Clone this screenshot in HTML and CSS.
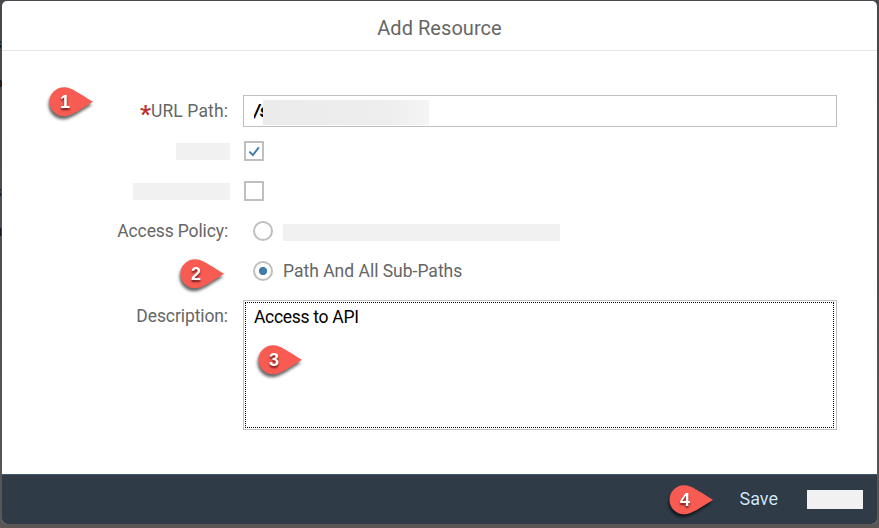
FILE: index.html
```html
<!DOCTYPE html>
<html lang="en">
<head>
<meta charset="utf-8">
<title>Add Resource</title>
<link rel="stylesheet" href="styles.css">
</head>
<body>
<div class="behind" aria-hidden="true"><span class="b1">s</span><span class="b2">o</span><span class="b3">s</span><span class="b4">a</span></div>
<main class="dialog">
  <header class="header"><h1 class="title">Add Resource</h1></header>
  <form class="form">
    <label class="label url"><b class="star">*</b><span>URL Path:</span></label>
    <div class="input"><span class="value">/s</span><span class="mask mask-url"></span></div>
    <span class="label"><span class="mask mask-a"></span></span>
    <span class="check"><svg width="16" height="16" viewBox="0 0 16 16"><path d="M3.400 8.600 6.900 12 12.900 4.300" fill="none" stroke="#427cac" stroke-width="1.900"/></svg></span>
    <span class="label"><span class="mask mask-b"></span></span>
    <span class="check"></span>
    <span class="label policy">Access Policy:</span>
    <div class="option"><span class="radio"></span><span class="mask mask-c"></span></div>
    <span></span>
    <div class="option"><span class="radio on"></span><span class="path">Path And All Sub-Paths</span></div>
    <label class="label desc">Description:</label>
    <div class="area"><div class="focus"><span class="api">Access to API</span></div></div>
  </form>
  <footer class="footer"><span class="save">Save</span><span class="mask mask-d"></span></footer>
</main>
<svg width="0" height="0" class="defs"><defs><path id="pin" d="M15 .3C21 .3 25 3 44 14.8C26 26.300 21 29.300 15 29.300A14.500 14.500 0 0 1 15 .3Z"/></defs></svg>
<div class="pin p1"><svg width="45" height="30"><use href="#pin"/></svg><b>1</b></div>
<div class="pin p2"><svg width="45" height="30"><use href="#pin"/></svg><b>2</b></div>
<div class="pin p3"><svg width="45" height="30"><use href="#pin"/></svg><b>3</b></div>
<div class="pin p4"><svg width="45" height="30"><use href="#pin"/></svg><b>4</b></div>
</body>
</html>
```
FILE: styles.css
```css
* { box-sizing: border-box; }
body {
  margin: 0;
  width: 879px;
  height: 528px;
  padding: 1px 2px 4px;
  overflow: hidden;
  position: relative;
  background: linear-gradient(#48474b, #504f51 50%, #5a5654);
  font-family: Roboto, "Liberation Sans", sans-serif;
  font-size: 17.5px;
  line-height: 20px;
  color: #666;
}
.behind span { position: absolute; left: -7px; color: #111; font-size: 17px; }
.behind .b1 { top: 33px; }
.behind .b2 { top: 72px; }
.behind .b3 { top: 181px; }
.behind .b4 { top: 220px; }
.dialog {
  position: relative;
  height: 523px;
  display: flex;
  flex-direction: column;
  background: #fff;
  border-radius: 5px;
  overflow: hidden;
}
.header {
  height: 50px;
  padding-top: 5px;
  border-bottom: 1px solid #e5e5e5;
  display: flex;
  align-items: center;
  justify-content: center;
}
.title { margin: 0; font-size: 20px; font-weight: 400; letter-spacing: .05px; white-space: nowrap; }
.form {
  flex: 1;
  padding: 40px 40px 0 0;
  display: grid;
  grid-template-columns: 226px 594px;
  column-gap: 15px;
  grid-template-rows: repeat(5, 40px) 130px;
  align-items: center;
  align-content: start;
}
.label { display: flex; justify-content: flex-end; white-space: nowrap; }
.url { letter-spacing: .12px; }
.policy { letter-spacing: -.13px; }
.star { color: #b33; font-size: 24px; line-height: 20px; padding-top: 3px; height: 20px; letter-spacing: 0; }
.input {
  height: 32px;
  border: 1px solid #bfbfbf;
  padding-left: 10px;
  display: flex;
  align-items: center;
}
.value { width: 9px; overflow: hidden; color: #000; font-style: italic; font-weight: 900; white-space: nowrap; }
.mask { background: #f1f1f1; height: 17px; }
.mask-url { width: 166px; height: 25px; margin-top: 2px; background: linear-gradient(90deg, #ebebeb, #eee 75%, #f4f4f4); }
.mask-a { width: 54px; margin-right: -2px; }
.mask-b { width: 97px; margin-right: -2px; }
.mask-c { width: 277px; margin-top: 3px; }
.check { width: 20px; height: 20px; margin-left: 1px; border: 2px solid #bfbfbf; display: flex; }
.option { padding-left: 10px; display: flex; gap: 10px; align-items: center; }
.radio { width: 20px; height: 20px; border: 2px solid #bfbfbf; border-radius: 50%; }
.radio.on { background: radial-gradient(circle, #427cac 3.7px, transparent 4.5px); }
.desc { align-self: start; margin-top: 15px; letter-spacing: -.1px; }
.area { margin-top: 18px; height: 130px; padding: 1px 2px 1px 1px; border: 1px solid #bfbfbf; }
.focus { height: 126px; border: 1px dotted #000; padding: 4px 0 0 8px; color: #000; }
.api { letter-spacing: -.3px; }
.footer {
  height: 50px;
  background: #2f3c48;
  border-top: 1px solid #3f566c;
  display: flex;
  align-items: center;
  justify-content: flex-end;
  padding: 0 14px 2px 0;
  gap: 29px;
}
.save { color: #d1e8ff; font-size: 18px; text-shadow: 0 0 1px #111; }
.mask-d { width: 56px; height: 19px; margin-top: 1px; }
.defs { position: absolute; }
.pin { position: absolute; width: 45px; height: 30px; fill: #f85b52; filter: drop-shadow(-1px 3px 1.5px rgba(0,0,0,.6)); }
.pin svg { display: block; }
.pin b {
  position: absolute;
  left: 0;
  top: 5px;
  width: 32px;
  text-align: center;
  font: 700 18px/20px "Liberation Sans", sans-serif;
  color: #fff;
  text-shadow: 0 2px 2px rgba(60,0,0,.7);
}
.p1 { left: 49px; top: 87px; }
.p2 { left: 180px; top: 259px; }
.p3 { left: 258px; top: 345px; }
.p4 { left: 669px; top: 485px; }
```
